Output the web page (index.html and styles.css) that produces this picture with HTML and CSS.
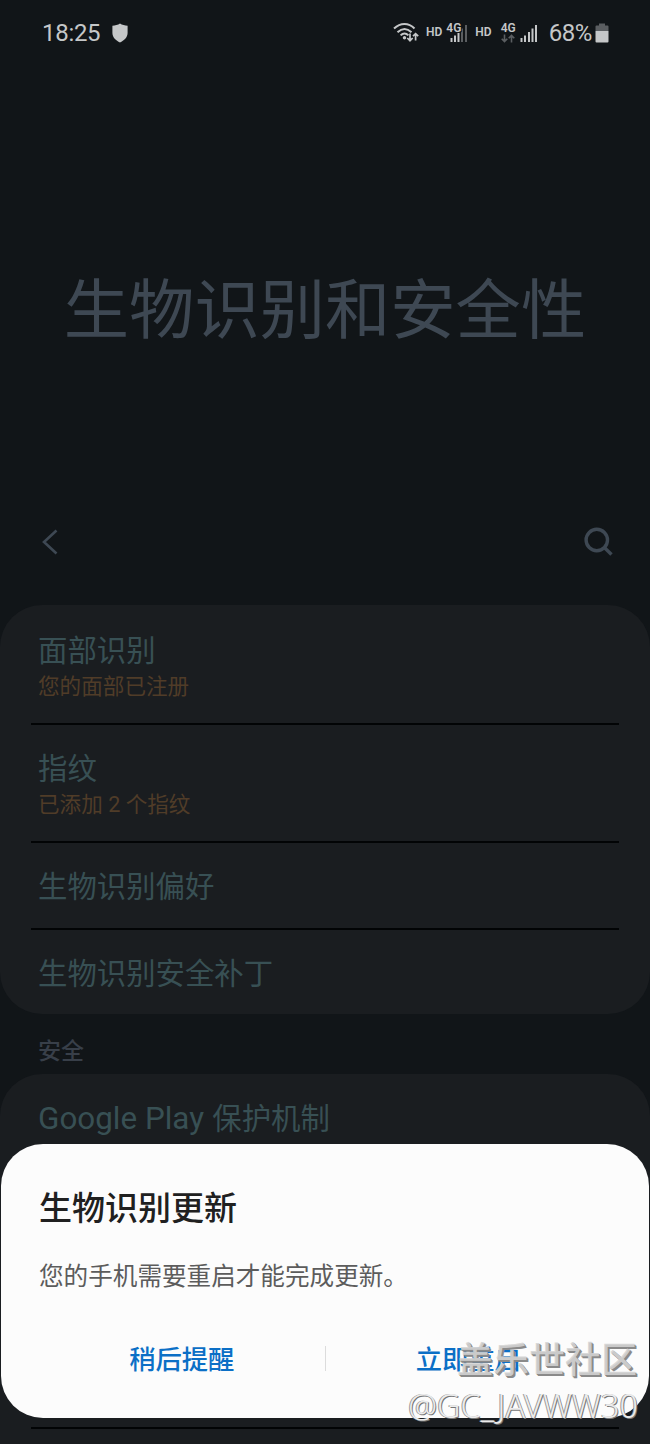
FILE: index.html
```html
<!DOCTYPE html>
<html lang="zh-CN">
<head>
    <meta charset="UTF-8">
    <meta name="viewport" content="width=device-width, initial-scale=1.0">
    <title>生物识别和安全性</title>
    <link rel="stylesheet" href="styles.css">
</head>
<body>
    <div class="screen">
        <header class="status-bar">
            <span class="clock">18:25</span>
            <svg class="shield" width="16" height="20" viewBox="0 0 16 20"><path d="M8 0.5C10 2 13 2.6 15.6 2.7V10C15.6 14.5 12 17.5 8 19.5C4 17.5 0.4 14.5 0.4 10V2.7C3 2.6 6 2 8 0.5Z"/></svg>
            <div class="status-icons">
                <svg class="wifi" width="27" height="22" viewBox="0 0 27 22">
                    <g fill="none" stroke-width="2">
                        <path d="M1 6.5C7.500 0.500 15.500 0.500 21.500 6.500"/>
                        <path d="M4.500 10.300C9 6 14 6 18.500 10.300"/>
                        <path d="M7.600 13.400C10 11 13 11 15.400 13.400"/>
                        <path stroke-width="1.700" d="M17 11.500V18.500M14.300 16L17 18.700L19.700 16M22.600 18.500V11.700M20 14.200L22.600 11.600L25.200 14.200"/>
                    </g>
                    <circle cx="11.500" cy="15.800" r="1.700"/>
                </svg>
                <span class="hd">HD</span>
                <div class="signal">
                    <span class="net">4G</span>
                    <svg width="18" height="18" viewBox="0 0 18 18">
                        <path d="M0.500 14H2.500V18H0.500ZM4 11.500H6V18H4ZM7.500 8H9.500V18H7.500Z"/>
                        <path class="dim" d="M11 4.500H13V18H11ZM15 1H17V18H15Z"/>
                    </svg>
                </div>
                <span class="hd">HD</span>
                <div class="data">
                    <span class="net">4G</span>
                    <svg width="14" height="9" viewBox="0 0 14 9"><path class="dim-line" d="M3.500 0.500V7.500M0.700 4.800L3.500 7.600L6.300 4.800M10.500 8.500V1.500M7.700 4.200L10.500 1.400L13.300 4.200"/></svg>
                </div>
                <svg class="bars" width="18" height="18" viewBox="0 0 18 18"><path d="M0.500 14H2.500V18H0.500ZM4 11.500H6V18H4ZM8 8H10V18H8ZM11.500 4.500H13.500V18H11.500ZM15 1H17V18H15Z"/></svg>
                <span class="percent">68%</span>
                <svg class="battery" width="14" height="20" viewBox="0 0 14 20">
                    <path class="dim" d="M4 0.500H10V2.500H12.500Q13.500 2.500 13.500 3.500V8H0.500V3.500Q0.500 2.500 1.500 2.500H4Z"/>
                    <path d="M0.500 8H13.500V18.500Q13.500 19.500 12.500 19.500H1.500Q0.500 19.500 0.500 18.500Z"/>
                </svg>
            </div>
        </header>

        <h1 class="page-title">生物识别和安全性</h1>

        <nav class="toolbar">
            <svg width="18" height="28" viewBox="0 0 18 28"><path d="M15.500 2.500L3 14L15.500 25.500"/></svg>
            <svg class="search" width="30" height="30" viewBox="0 0 30 30"><circle cx="12.800" cy="13" r="10.700"/><path d="M20.300 20.500L27.500 27.500"/></svg>
        </nav>

        <section class="card">
            <div class="row first">
                <div class="name">面部识别</div>
                <div class="summary">您的面部已注册</div>
            </div>
            <div class="row">
                <div class="name">指纹</div>
                <div class="summary">已添加 2 个指纹</div>
            </div>
            <div class="row small">
                <div class="name">生物识别偏好</div>
            </div>
            <div class="row last">
                <div class="name">生物识别安全补丁</div>
            </div>
        </section>

        <h2 class="section-title">安全</h2>

        <section class="card more">
            <div class="row tall">
                <div class="name"><span class="latin">Google Play</span> 保护机制</div>
            </div>
        </section>

        <div class="dialog">
            <h3>生物识别更新</h3>
            <p>您的手机需要重启才能完成更新。</p>
            <div class="actions">
                <button>稍后提醒</button>
                <span class="divider"></span>
                <button>立即重启</button>
            </div>
        </div>

        <div class="watermark">
            <div class="site">盖乐世社区</div>
            <div class="user">@GC_JAVWW30</div>
        </div>
    </div>
</body>
</html>
```
FILE: styles.css
```css
:root {
    --bg: #111518;
    --card: #1a1d20;
    --icon: #c5c7c8;
    --dim: #5b5e61;
    --slate: #3e4853;
    --teal: #385054;
    --brown: #503c28;
    --blue: #0b6fc6;
}

* {
    box-sizing: border-box;
}

body {
    margin: 0;
    font-family: Roboto, "Noto Sans CJK SC", sans-serif;
    background: var(--bg);
}

h1, h2, h3, p {
    margin: 0;
}

.screen {
    position: relative;
    display: flex;
    flex-direction: column;
    height: 1444px;
    overflow: hidden;
}

/* status bar */
.status-bar {
    display: flex;
    align-items: center;
    height: 66px;
    padding: 0 41px 0 42px;
    color: var(--icon);
    fill: var(--icon);
}

.clock {
    font-size: 24px;
    letter-spacing: -0.3px;
}

.shield {
    margin-left: 12px;
}

.status-icons {
    display: flex;
    align-items: center;
    margin-left: auto;
}

.wifi {
    stroke: var(--icon);
}

.wifi circle {
    stroke: none;
}

.hd {
    margin: -2px 0 0 6px;
    font-size: 12px;
    font-weight: 600;
    line-height: 14px;
}

.net {
    font-size: 12px;
    font-weight: 600;
    line-height: 10px;
}

.signal {
    position: relative;
    display: flex;
    justify-content: flex-end;
    width: 22px;
    margin: 0 1px 0 4px;
}

.signal .net {
    position: absolute;
    left: 0;
    top: -1px;
    text-shadow: 0 0 1px var(--bg), 1px 1px 0 var(--bg);
}

.data {
    display: flex;
    flex-direction: column;
    gap: 1px;
    width: 16px;
    margin: -1px 0 0 9px;
}

.bars {
    margin: 0 0 0 3px;
}

.dim {
    fill: var(--dim);
}

.dim-line {
    fill: none;
    stroke: var(--dim);
    stroke-width: 1.6;
}

.percent {
    margin-left: 11px;
    font-size: 24px;
    letter-spacing: -0.4px;
}

.battery {
    margin-left: 3px;
}

/* heading */
.page-title {
    height: 434px;
    padding-top: 197px;
    color: var(--slate);
    font-size: 65.300px;
    font-weight: 400;
    line-height: 96px;
    text-align: center;
}

.toolbar {
    display: flex;
    align-items: center;
    justify-content: space-between;
    height: 105px;
    padding: 0 36px 21px 41px;
    fill: none;
    stroke: var(--slate);
    stroke-width: 2.6;
}

.search {
    stroke-width: 3.4;
}

/* settings list */
.card {
    background: var(--card);
    border-radius: 42px;
}

.row {
    height: 118px;
    margin: 0 31px;
    padding: 25px 7px 0;
    border-bottom: 2px solid #020405;
}

.row.first {
    height: 120px;
    padding-top: 27px;
}

.row.small {
    height: 87px;
}

.row.last {
    height: 84px;
    border-bottom: none;
}

.name {
    color: var(--teal);
    font-size: 29.400px;
    line-height: 38px;
}

.latin {
    margin-right: 1px;
    font-size: 31.400px;
    line-height: 1;
}

.summary {
    color: var(--brown);
    font-size: 21.600px;
    line-height: 34px;
}

.section-title {
    height: 60px;
    padding: 22px 38px 0;
    color: #383f49;
    font-size: 23px;
    font-weight: 500;
    line-height: 32px;
}

.more {
    flex: 1;
    border-radius: 42px 42px 0 0;
}

.row.tall {
    height: 355px;
    padding-top: 26px;
}

/* update dialog */
.dialog {
    position: absolute;
    left: 1px;
    right: 1px;
    top: 1144px;
    height: 274px;
    padding: 42px 38px 0;
    background: #fcfcfc;
    border-radius: 42px;
}

.dialog h3 {
    color: #202020;
    font-size: 33px;
    font-weight: 500;
    line-height: 46px;
}

.dialog p {
    margin-top: 27px;
    color: #5c5c5c;
    font-size: 24.600px;
    line-height: 36px;
}

.actions {
    display: flex;
    align-items: center;
    margin-top: 43px;
}

.actions button {
    flex: 1;
    padding: 0;
    border: none;
    background: none;
    color: var(--blue);
    font-family: inherit;
    font-size: 26.300px;
    font-weight: 500;
    line-height: 44px;
}

.divider {
    width: 1px;
    height: 25px;
    margin-top: -3px;
    background: #dcdcdc;
}

/* forum stamp in the corner */
.watermark {
    position: absolute;
    right: 12px;
    bottom: 17px;
    text-align: right;
}

.site {
    margin-right: 1px;
    color: rgba(212, 212, 212, 0.9);
    font-size: 36px;
    font-weight: 500;
    line-height: 44px;
    text-shadow: 1px 1px 0 #8a8a8a, 2px 2px 0 #8a8a8a;
}

.user {
    color: #ececec;
    font-family: "Noto Sans", sans-serif;
    font-size: 32.400px;
    font-weight: 300;
    line-height: 44px;
    text-shadow: 1px 1px 0 #777, -1px 0 0 #999;
}
```
